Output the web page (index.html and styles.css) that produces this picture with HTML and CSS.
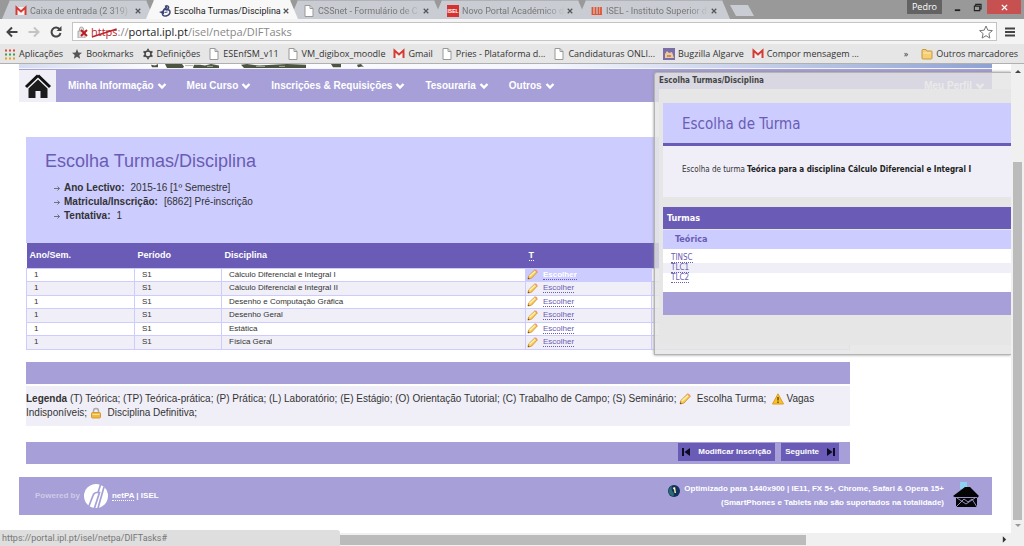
FILE: index.html
```html
<!DOCTYPE html>
<html lang="pt">
<head>
<meta charset="utf-8">
<title>Escolha Turmas/Disciplina</title>
<link rel="stylesheet" href="styles.css">
</head>
<body>
<svg class="defs" width="0" height="0" aria-hidden="true">
  <symbol id="doc" viewBox="0 0 10 12"><path d="M1 .5h5l3 3v8H1z" fill="#fff" stroke="#999"/><path d="M6 .5v3h3" fill="none" stroke="#999"/></symbol>
  <symbol id="gmail" viewBox="0 0 12 10"><path d="M1 1h10v8H1z" fill="#f4f0f0"/><path d="M1.500 9V1.500L6 5.500l4.500-4V9" fill="none" stroke="#d23c34" stroke-width="2"/></symbol>
  <symbol id="cross" viewBox="0 0 8 8"><path d="M1 1l6 6M7 1L1 7" stroke="currentColor" stroke-width="1.600" fill="none"/></symbol>
  <symbol id="chev" viewBox="0 0 10 8"><path d="M1.500 2L5 5.600 8.500 2" stroke="currentColor" stroke-width="2.400" fill="none"/></symbol>
  <symbol id="pencil" viewBox="0 0 12 12"><path d="M1 11l.8-3.500L8.500 1l2.800 2.200L5 10z" fill="#f9cf52" stroke="#c98238" stroke-width=".8"/><path d="M2.800 8L9.300 2.200" stroke="#fff3b4" stroke-width="1.400"/><path d="M8.200 1.500L9.600.4l2 2-1.200 1.200z" fill="#ee9a72"/><path d="M1 11l.5-1.800L2.800 10.500z" fill="#5a3a1a"/></symbol>
  <symbol id="arrow" viewBox="0 0 8 7"><path d="M1 3.500h5.500M4.500 1.500l2 2-2 2" stroke="#666" fill="none" stroke-width=".9"/></symbol>
</svg>

<header class="browser">
  <div class="tabstrip">
    <div class="tabs">
      <div class="tab"><svg class="ico"><use href="#gmail"/></svg><span class="tab-title">Caixa de entrada (2 319) -</span><button class="close" aria-label="Fechar"><svg><use href="#cross"/></svg></button></div>
      <div class="tab active"><svg class="ico" viewBox="0 0 12 12"><path d="M6 1.500Q9 0 9.500 2T6.500 5Q11 4 11 7T7 11Q3 11.500 3.500 8T8 2" fill="none" stroke="#3d4474" stroke-width="1.500"/><path d="M0 7l5-1.500v4z" fill="#3d4474"/><path d="M5.500 7.500l3-.5" stroke="#3d4474"/></svg><span class="tab-title">Escolha Turmas/Disciplina</span><button class="close" aria-label="Fechar"><svg><use href="#cross"/></svg></button></div>
      <div class="tab"><svg class="ico"><use href="#doc"/></svg><span class="tab-title">CSSnet - Formulário de C</span><button class="close" aria-label="Fechar"><svg><use href="#cross"/></svg></button></div>
      <div class="tab"><span class="ico isel">ISEL</span><span class="tab-title">Novo Portal Académico d</span><button class="close" aria-label="Fechar"><svg><use href="#cross"/></svg></button></div>
      <div class="tab"><svg class="ico" viewBox="0 0 12 12"><path d="M1.500 2v8M4.500 2v8M7.500 2v8M10 2v8" stroke="#e2542f" stroke-width="1.800"/><path d="M1 9.500h10" stroke="#e2542f"/></svg><span class="tab-title">ISEL - Instituto Superior d</span><button class="close" aria-label="Fechar"><svg><use href="#cross"/></svg></button></div>
      <button class="newtab" aria-label="Novo separador"></button>
    </div>
    <div class="winctl">
      <button class="user">Pedro</button>
      <button class="wbtn" aria-label="Minimizar"><svg viewBox="0 0 10 10"><path d="M2 8h6" stroke="#222" stroke-width="2"/></svg></button>
      <button class="wbtn" aria-label="Restaurar"><svg viewBox="0 0 10 10"><path d="M3 3V1.500h6v5H7.500M1.500 3.500h6v5h-6z" stroke="#222" fill="none" stroke-width="1.200"/></svg></button>
      <button class="wbtn wclose" aria-label="Fechar janela"><svg><use href="#cross"/></svg></button>
    </div>
  </div>
  <div class="toolbar">
    <button class="tool" aria-label="Retroceder"><svg viewBox="0 0 12 12"><path d="M11.500 6H2M6 1.500L1.500 6 6 10.500" stroke="#444" stroke-width="2" fill="none"/></svg></button>
    <button class="tool" aria-label="Avançar"><svg viewBox="0 0 12 12"><path d="M.5 6H10M6 1.500L10.500 6 6 10.500" stroke="#c4c4c4" stroke-width="2" fill="none"/></svg></button>
    <button class="tool" aria-label="Recarregar"><svg viewBox="0 0 12 12"><path d="M9.800 3.500A4.500 4.500 0 1 0 10.500 7" stroke="#444" stroke-width="2" fill="none"/><path d="M11.500 0v5h-5z" fill="#444"/></svg></button>
    <div class="omnibox">
      <svg class="lock" viewBox="0 0 12 12"><path d="M1 5h7v7H1zM2.500 5V3a2 2 0 0 1 4 0v2" fill="#ddd" stroke="#aaa"/><path d="M4 4l6 6M10 4l-6 6" stroke="#c01c20" stroke-width="2"/></svg>
      <div class="url"><span class="scheme">https<svg viewBox="0 0 30 12" preserveAspectRatio="none"><path d="M1 10L29 2" stroke="#b8242a" stroke-width="1.500"/></svg></span>://<b>portal.ipl.pt</b>/isel/netpa/DIFTasks</div>
      <svg class="star" viewBox="0 0 14 14"><path d="M7 1l1.800 4.200 4.600.4-3.500 3 1 4.500L7 10.700 3.100 13.100l1-4.500-3.500-3 4.600-.4z" fill="#fff" stroke="#777"/></svg>
    </div>
    <button class="tool menu" aria-label="Menu"><svg viewBox="0 0 12 12"><path d="M1 2.500h10M1 6h10M1 9.500h10" stroke="#444" stroke-width="2"/></svg></button>
  </div>
  <nav class="bookmarks">
    <a href="#"><svg class="ico" viewBox="0 0 12 12"><path d="M1 2.500h10" stroke="#e04a3c" stroke-width="2" stroke-dasharray="2 2"/><path d="M1 6.500h10" stroke="#3a9d58" stroke-width="2" stroke-dasharray="2 2"/><path d="M1 10.500h10" stroke="#e8a020" stroke-width="2" stroke-dasharray="2 2"/></svg>Aplicações</a>
    <a href="#"><svg class="ico" viewBox="0 0 12 12"><path d="M6 1l1.400 3.400 3.600.3-2.700 2.400.8 3.600L6 8.800l-3.100 1.900.8-3.600L1 4.700l3.600-.3z" fill="#555"/></svg>Bookmarks</a>
    <a href="#"><svg class="ico" viewBox="0 0 12 12"><circle cx="6" cy="6" r="3" fill="none" stroke="#444" stroke-width="1.500"/><path d="M6 .8v2M6 9.200v2M1.500 3.400l1.700 1M8.800 7.600l1.700 1M1.500 8.600l1.700-1M8.800 4.400l1.700-1" stroke="#444" stroke-width="1.700"/></svg>Definições</a>
    <a href="#"><svg class="ico"><use href="#doc"/></svg>ESEnfSM_v11</a>
    <a href="#"><svg class="ico"><use href="#doc"/></svg>VM_digibox_moodle</a>
    <a href="#"><svg class="ico"><use href="#gmail"/></svg>Gmail</a>
    <a href="#"><svg class="ico"><use href="#doc"/></svg>Pries - Plataforma d...</a>
    <a href="#"><svg class="ico"><use href="#doc"/></svg>Candidaturas ONLI...</a>
    <a href="#"><svg class="ico" viewBox="0 0 12 12"><path d="M0 0h12v12H0z" fill="#7a6ea8"/><path d="M2 10V6l2-3 2 2 3-1 2 6z" fill="#f0c89a"/><path d="M4 8h4" stroke="#8a5a4a"/></svg>Bugzilla Algarve</a>
    <a href="#"><svg class="ico"><use href="#gmail"/></svg>Compor mensagem ...</a>
    <button class="more" aria-label="Mais marcadores">»</button>
    <a href="#"><svg class="ico" viewBox="0 0 12 12"><path d="M1 2.500q0-1 1-1h3l1 1.500h4.500q.5 0 .5.500V10q0 1-1 1H2q-1 0-1-1z" fill="#f5cf74" stroke="#c9963a"/><path d="M2 5h8" stroke="#fbe8b4"/></svg>Outros marcadores</a>
  </nav>
</header>

<div class="viewport">
  <main class="page">
    <div class="banner"><svg viewBox="0 0 344 5" preserveAspectRatio="none"><path d="M0 1l4 1 3-2v4H1zM14 0h17l2 3-1 2H16zM43 1h6l5 1 6-2 8 2v3H42zM90 1l6-1 12 2 14-1 14-1 19 1v4H93zM180 0h10v4h-8zM206 1l4-1 3 4-2-1-4 1z" fill="#4b5540"/><path d="M34 2h8M56 3h6M105 3h9M128 3h6" stroke="#a9b59a"/></svg></div>
    <nav class="mainnav">
      <a class="home" href="#" aria-label="Início"><svg viewBox="0 0 28 26"><path d="M14 2.500l12 11.500M14 2.500L2 14" stroke="#111" stroke-width="3"/><path d="M14 6.500l9.500 9V25h-7v-7h-5v7h-7v-9.500z" fill="#1c1c1c"/></svg></a>
      <a href="#">Minha Informação<svg><use href="#chev"/></svg></a>
      <a href="#">Meu Curso<svg><use href="#chev"/></svg></a>
      <a href="#">Inscrições &amp; Requisições<svg><use href="#chev"/></svg></a>
      <a href="#">Tesouraria<svg><use href="#chev"/></svg></a>
      <a href="#">Outros<svg><use href="#chev"/></svg></a>
      <a class="profile" href="#">Meu Perfil<svg><use href="#chev"/></svg></a>
    </nav>
    <div class="content">
      <section class="summary">
        <h1>Escolha Turmas/Disciplina</h1>
        <ul>
          <li><svg><use href="#arrow"/></svg><b>Ano Lectivo:</b>2015-16 [1º Semestre]</li>
          <li><svg><use href="#arrow"/></svg><b>Matricula/Inscrição:</b>[6862] Pré-inscrição</li>
          <li><svg><use href="#arrow"/></svg><b>Tentativa:</b>1</li>
        </ul>
      </section>
      <table class="courses">
        <colgroup><col class="c1"><col class="c2"><col class="c3"><col class="c4"><col></colgroup>
        <thead><tr><th>Ano/Sem.</th><th>Período</th><th>Disciplina</th><th><a href="#">T</a></th><th></th></tr></thead>
        <tbody>
          <tr><td>1</td><td>S1</td><td>Cálculo Diferencial e Integral I</td><td class="picked"><svg><use href="#pencil"/></svg><a href="#">Escolher</a></td><td></td></tr>
          <tr><td>1</td><td>S1</td><td>Cálculo Diferencial e Integral II</td><td><svg><use href="#pencil"/></svg><a href="#">Escolher</a></td><td></td></tr>
          <tr><td>1</td><td>S1</td><td>Desenho e Computação Gráfica</td><td><svg><use href="#pencil"/></svg><a href="#">Escolher</a></td><td></td></tr>
          <tr><td>1</td><td>S1</td><td>Desenho Geral</td><td><svg><use href="#pencil"/></svg><a href="#">Escolher</a></td><td></td></tr>
          <tr><td>1</td><td>S1</td><td>Estática</td><td><svg><use href="#pencil"/></svg><a href="#">Escolher</a></td><td></td></tr>
          <tr><td>1</td><td>S1</td><td>Física Geral</td><td><svg><use href="#pencil"/></svg><a href="#">Escolher</a></td><td></td></tr>
        </tbody>
      </table>
      <div class="bar"></div>
      <p class="legend"><b>Legenda</b> (T) Teórica; (TP) Teórica-prática; (P) Prática; (L) Laboratório; (E) Estágio; (O) Orientação Tutorial; (C) Trabalho de Campo; (S) Seminário; <svg><use href="#pencil"/></svg>&nbsp; Escolha Turma; &nbsp;<svg viewBox="0 0 12 12"><path d="M6 .8L11.500 11H.5z" fill="#f8c22c" stroke="#dc9c1c" stroke-linejoin="round"/><path d="M6 4v3.500M6 8.500V10" stroke="#4a3000" stroke-width="1.200"/></svg> Vagas Indisponíveis; <svg viewBox="0 0 12 12"><path d="M3.500 6V4a2.500 2.500 0 0 1 5 0v2" fill="none" stroke="#aaa" stroke-width="1.500"/><rect x="1.500" y="5.500" width="9" height="5.500" rx="1" fill="#f0b840" stroke="#d89a38"/><path d="M2.500 7.500h7" stroke="#fce39a"/></svg>&nbsp; Disciplina Definitiva;</p>
      <div class="bar actions">
        <button><svg viewBox="0 0 8 8"><path d="M0 0h2v8H0zM8 0v8L2.500 4z" fill="#0c0c20"/></svg>Modificar Inscrição</button>
        <button>Seguinte<svg viewBox="0 0 8 8"><path d="M6 0h2v8H6zM0 0v8l5.500-4z" fill="#0c0c20"/></svg></button>
      </div>
    </div>
    <footer class="foot">
      <span class="powered">Powered by</span>
      <svg class="logo" viewBox="0 0 24 24"><circle cx="12" cy="12" r="12" fill="#fff"/><path d="M16.800 0L14 8.500M5 22L9 11.500Q10 8.500 13 8.500h2.500L10.500 24M20 3L14 24" fill="none" stroke="#a59fd7" stroke-width="1.700"/></svg>
      <span class="brand"><a href="#">netPA</a> | ISEL</span>
      <svg class="globe" viewBox="0 0 12 12"><circle cx="6" cy="6" r="6" fill="#12305c"/><path d="M1 8a5.500 5.500 0 0 1 3-7Q3 5 5 7t0 4.500Q2 11 1 8z" fill="#2a6a74"/><path d="M5 3.500L6.500 3l.8 5" fill="none" stroke="#f4f0b0" stroke-width="1.500"/></svg>
      <p>Optimizado para 1440x900 | IE11, FX 5+, Chrome, Safari &amp; Opera 15+<br>(SmartPhones e Tablets não são suportados na totalidade)</p>
      <svg class="mail" viewBox="0 0 26 27"><path d="M7 0h7v7H7z" fill="#8fd0f2"/><path d="M12 5h5l9 9-2 2v9H3v-9l-3-2z" fill="#050505"/><path d="M1 15.500h23M3 25l8-8 4 3 4-3 5 8M4 16l9 6 9-6" fill="none" stroke="#a69fd8" stroke-width=".9"/></svg>
    </footer>

    <section class="dialog" role="dialog" aria-label="Escolha Turmas/Disciplina">
      <div class="dialog-title">Escolha Turmas/Disciplina</div>
      <div class="dialog-body">
        <h2>Escolha de Turma</h2>
        <p>Escolha de turma <b>Teórica para a disciplina Cálculo Diferencial e Integral I</b></p>
        <h3>Turmas</h3>
        <h4>Teórica</h4>
        <ul>
          <li><a href="#">TINSC</a></li>
          <li><a href="#">TLC1</a></li>
          <li><a href="#">TLC2</a></li>
        </ul>
        <div class="dialog-bar"></div>
      </div>
    </section>
  </main>
  <div class="vscroll"><svg viewBox="0 0 8 6"><path d="M0 5h8L4 1z" fill="#444"/></svg><div class="vthumb"></div><svg viewBox="0 0 8 6"><path d="M0 1h8L4 5z" fill="#999"/></svg></div>
  <div class="hscroll"><div class="hthumb"></div><svg viewBox="0 0 6 8"><path d="M1 0v8l4-4z" fill="#333"/></svg></div>
  <div class="status">https://portal.ipl.pt/isel/netpa/DIFTasks#</div>
</div>
</body>
</html>
```
FILE: styles.css
```css
* { box-sizing: border-box; }
body {
  margin: 0;
  height: 100vh;
  display: flex;
  flex-direction: column;
  overflow: hidden;
  background: #fff;
  color: #333;
  font: 10px/14px "Liberation Sans", Arial, sans-serif;
}
h1, h2, h3, h4, p, ul { margin: 0; padding: 0; font-weight: normal; }
ul { list-style: none; }
button { border: 0; padding: 0; margin: 0; background: none; font: inherit; color: inherit; }
a { color: inherit; text-decoration: none; }
.defs { position: absolute; }

/* browser frame */
.browser { flex: none; font: 9px/12px "Open Sans", "Noto Sans", sans-serif; color: #333; }
.tabstrip { display: flex; justify-content: space-between; height: 19px; background: #999; }
.tabs { display: flex; padding-left: 2px; font-family: Roboto, sans-serif; }
.tab {
  display: flex;
  align-items: center;
  width: 152px;
  height: 19px;
  margin-right: -8px;
  padding: 1px 10px 0 13px;
  background: #c9ccd2;
  color: #777;
  clip-path: polygon(8px 0, 144px 0, 152px 100%, 0 100%);
  border-top: 1px solid #b0b2b6;
}
.tab.active { background: #f8f8f8; color: #222; position: relative; z-index: 1; border-color: #f8f8f8; }
.ico { flex: none; width: 12px; height: 12px; }
.tab-title {
  flex: 1;
  margin: 0 2px 0 3px;
  white-space: nowrap;
  mask-image: linear-gradient(90deg, #000 80%, transparent);
}
.tab.active .tab-title { mask-image: none; }
.isel { background: #d8322f; color: #fff; font: bold 5px/12px "Liberation Sans", sans-serif; text-align: center; }
.close { width: 6px; height: 6px; margin-right: 3px; color: #555; display: flex; }
.close svg { width: 6px; height: 6px; }
.newtab { width: 24px; height: 11px; margin: 5px 0 0 8px; background: #c9ccd2; clip-path: polygon(0 0, 18px 0, 100% 100%, 6px 100%); }
.winctl { display: flex; padding-right: 3px; height: 14px; }
.user { width: 35px; background: #636363; color: #fff; margin-right: 5px; }
.wbtn { width: 20px; display: flex; align-items: center; justify-content: center; }
.wbtn svg { width: 9px; height: 9px; }
.wclose { width: 34px; background: #c75050; color: #fff; }
.wclose svg { width: 7px; height: 7px; }

.toolbar { display: flex; align-items: center; height: 25px; padding: 0 6px; background: #f4f4f4; }
.tool { width: 14px; height: 14px; margin-right: 8px; display: flex; align-items: center; }
.tool svg { width: 12px; height: 12px; }
.tool.menu { margin: 0 0 0 7px; }
.omnibox {
  flex: 1;
  display: flex;
  align-items: center;
  height: 19px;
  padding: 0 3px;
  background: #fff;
  border: 1px solid #c4c4c4;
  font-size: 11px;
  line-height: 16px;
}
.lock { width: 12px; height: 12px; margin: 0 2px 0 1px; }
.url { flex: 1; color: #888; }
.url b { color: #222; font-weight: normal; }
.scheme { position: relative; color: #b8242a; }
.scheme svg { position: absolute; left: 0; top: 3px; width: 100%; height: 12px; }
.star { width: 14px; height: 14px; }
.bookmarks { display: flex; align-items: center; height: 20px; padding: 0 6px 0 4px; background: #e6e6e6; border-bottom: 1px solid #b0b0b0; white-space: nowrap; }
.bookmarks a { display: flex; align-items: center; gap: 3px; margin-right: 8px; }
.bookmarks a:last-child { margin-right: 0; }
.more { margin: 0 13px 0 auto; }

/* web page */
.viewport { flex: 1; min-height: 0; position: relative; display: grid; grid-template-columns: 1fr 13px; grid-template-rows: 1fr 13px; }
.page { position: relative; overflow: hidden; padding: 0 19px; background: #fff; }
.banner { height: 5px; background: linear-gradient(90deg, #d4dcf0, #fff 15%, #f4f6fc 55%, #8ea2d2); border-bottom: 1px solid #f4f4f8; }
.banner svg { display: block; width: 344px; height: 4px; margin-left: 132px; }
.mainnav { display: flex; align-items: center; height: 33px; background: #a69fd8; color: #fff; font-weight: bold; }
.mainnav a { display: flex; align-items: center; gap: 3px; margin-right: 20px; }
.mainnav svg { width: 10px; height: 8px; }
.mainnav .home { width: 37px; height: 32px; margin-right: 12px; background: #f0eff8; justify-content: center; }
.mainnav .home svg { width: 28px; height: 26px; }
.mainnav .profile { margin: 0 7px 0 auto; }

.content { margin: 35px 142px 0 7px; }
.summary { height: 106px; padding: 13px 19px; background: #ccf; }
.summary h1 { font-size: 18px; line-height: 22px; color: #6a5cb4; }
.summary ul { padding: 9px 0 0 8px; }
.summary li { display: flex; align-items: center; height: 14px; }
.summary li svg { width: 8px; height: 7px; margin-right: 3px; }
.summary b { margin-right: 6px; }

.courses { width: 100%; table-layout: fixed; border-collapse: collapse; font-size: 8px; line-height: 10px; }
.c1 { width: 108px; }
.c2 { width: 87px; }
.c3 { width: 304px; }
.c4 { width: 126px; }
.courses th { height: 25px; padding: 0 3px; background: #6a5cb6; color: #fff; font-size: 9px; text-align: left; }
.courses th a { border-bottom: 1px dotted #fff; }
.courses td { padding: 0 7px; border: 1px solid #ccf; }
.courses td:nth-child(4) { padding-left: 1px; }
.courses tbody tr:nth-child(odd) { height: 13px; }
.courses tbody tr:nth-child(even) { height: 14px; background: #f0eff8; }
.courses svg { width: 11px; height: 11px; margin-right: 5px; vertical-align: middle; }
.courses td a { color: #6a5cb4; border-bottom: 1px dotted #6a5cb4; }
.courses .picked { background: #ccf; }
.courses .picked a { color: #fff; font-weight: bold; }

.bar { height: 22px; margin-top: 12px; background: #a69fd8; }
.legend { margin-top: 2px; padding: 6px 0; background: #f0eff8; }
.legend svg { width: 12px; height: 12px; vertical-align: middle; }
.actions { display: flex; justify-content: flex-end; align-items: flex-start; gap: 6px; margin-top: 16px; padding: 1px 11px 0 0; }
.actions button { display: flex; align-items: center; gap: 8px; height: 18px; padding: 0 4px; background: #6a5cb6; color: #fff; font-size: 8px; font-weight: bold; }
.actions svg { width: 8px; height: 8px; }

.foot { display: flex; align-items: center; height: 38px; margin-top: 13px; padding: 0 13px 0 16px; background: #a69fd8; color: #fff; font-size: 8px; font-weight: bold; }
.powered { color: #cfcbe6; }
.logo { width: 24px; height: 24px; margin: 0 4px; }
.brand a { border-bottom: 1px dotted #fff; }
.globe { width: 12px; height: 12px; margin: 0 4px 10px auto; }
.foot p { text-align: right; font-weight: bold; }
.mail { width: 26px; height: 27px; margin-left: 9px; }

/* floating window */
.dialog {
  position: absolute;
  top: 8px;
  right: 0;
  width: 357px;
  height: 283px;
  padding: 0 0 9px 4px;
  background: rgba(228, 228, 228, .82);
  border: 1px solid #b4b4b4;
  border-right: 0;
  border-radius: 3px 0 0 0;
  box-shadow: 0 0 3px #888;
  font: 8px/10px "DejaVu Sans Condensed", "DejaVu Sans", sans-serif;
}
.dialog-title { height: 16px; line-height: 15px; font-weight: bold; color: #444; }
.dialog-body { height: 256px; padding: 14px 0 0 4px; background: #e6e6e6; }
.dialog h2 { height: 43px; padding-left: 19px; font-size: 15px; line-height: 42px; color: #6a5cb4; background: #ccf; border-bottom: 3px solid #6a5cb6; }
.dialog p { height: 51px; padding: 19px; background: #f0eff8; }
.dialog p b { color: #222; }
.dialog h3 { margin-top: 10px; height: 22px; padding-left: 4px; font-size: 9px; line-height: 22px; font-weight: bold; color: #fff; background: #6a5cb6; }
.dialog h4 { height: 19px; margin-top: 1px; padding-left: 12px; font-size: 9px; line-height: 18px; font-weight: bold; color: #6a5cb4; background: #ccf; }
.dialog ul { height: 43px; padding-top: 4px; background: #fff; }
.dialog li { height: 10px; padding-left: 8px; color: #6a5cb4; }
.dialog li:nth-child(2) { background: #f0eff8; }
.dialog li a { border-bottom: 1px dotted #6a5cb4; }
.dialog-bar { height: 23px; background: #a69fd8; }

/* scrollbars and status bubble */
.vscroll { grid-column: 2; grid-row: 1; display: flex; flex-direction: column; align-items: center; padding: 5px 0; background: #f0f0f0; }
.vscroll svg { flex: none; width: 6px; height: 5px; }
.vthumb { width: 9px; flex: 1; margin: 88px 0 3px; background: #bbb; }
.hscroll { grid-column: 1 / 3; grid-row: 2; display: flex; align-items: center; justify-content: space-between; padding-right: 17px; background: #f0f0f0; }
.hscroll svg { width: 5px; height: 7px; }
.hthumb { width: 80%; height: 10px; background: #bbb; }
.status {
  position: absolute;
  left: 0;
  bottom: 0;
  width: 340px;
  height: 16px;
  padding-left: 2px;
  background: #dedede;
  border-radius: 0 3px 0 0;
  color: #777;
  font: 9px/16px Roboto, "Noto Sans", sans-serif;
}
```
